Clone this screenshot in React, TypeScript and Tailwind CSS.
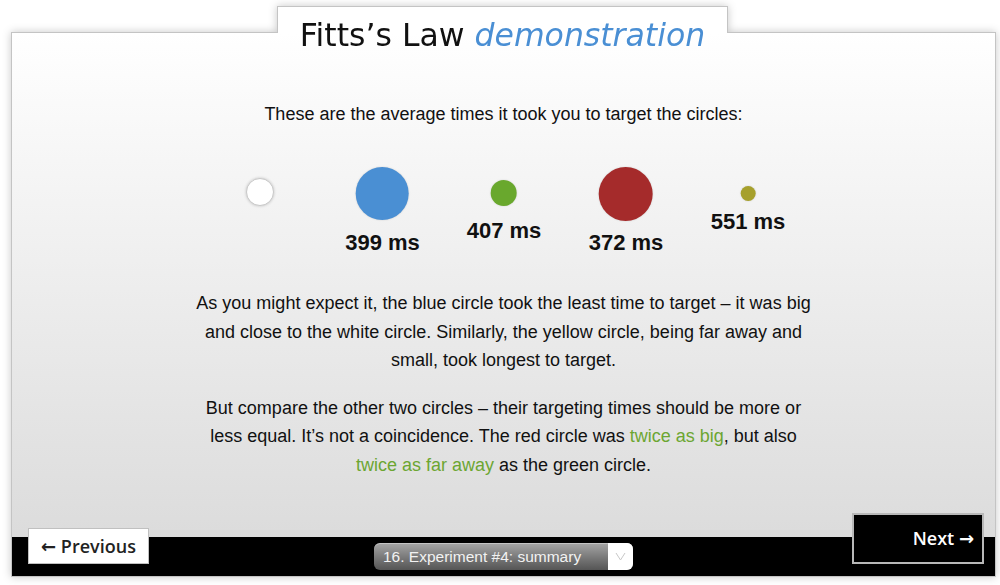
import React from "react";

export default function App() {
  return (
    <div className="w-[1000px] h-[585px] bg-white overflow-hidden" style={{ fontFamily: '"Liberation Sans", Arial, sans-serif' }}>
      <div className="pt-[6px] [filter:drop-shadow(0_0_4px_rgba(0,0,0,0.22))]">
        {/* Tab */}
        <div className="ml-[277px] w-[451px] h-[27px] -mb-px relative z-10 bg-white border-t border-x border-[#c4c4c4]">
          <div
            className="text-center text-[31.5px] leading-[40px] mt-[8px] whitespace-nowrap text-[#111]"
            style={{ fontFamily: '"DejaVu Sans", Verdana, sans-serif' }}
          >
            Fitts’s Law <span className="italic text-[#4a8fd4]">demonstration</span>
          </div>
        </div>
        {/* Panel */}
        <div className="ml-[11px] w-[985px] h-[545px] border border-[#c4c4c4] bg-gradient-to-b from-white to-[#d9d9d9] flex flex-col">
          <div className="flex-1 flex flex-col pt-[67px] text-[18px] text-[#111]">
            <p className="text-center leading-[28px]">These are the average times it took you to target the circles:</p>
            {/* Circles canvas */}
            <div className="relative h-[161px] w-full">
              <div className="absolute left-[248px] top-[50px] -translate-x-1/2 flex flex-col items-center">
                <div className="w-[28px] h-[28px] rounded-full bg-white border border-[#c8c8c8] shadow-[0_0_3px_rgba(0,0,0,0.2)]" />
              </div>
              <div className="absolute left-[370.5px] top-[39px] -translate-x-1/2 flex flex-col items-center">
                <div className="w-[53px] h-[53px] rounded-full bg-[#4a8fd3] shadow-[0_0_2px_rgba(0,0,0,0.15)]" />
                <div className="mt-[12px] text-[22px] leading-none font-bold whitespace-nowrap">399 ms</div>
              </div>
              <div className="absolute left-[492px] top-[52px] -translate-x-1/2 flex flex-col items-center">
                <div className="w-[26px] h-[26px] rounded-full bg-[#69a82d] shadow-[0_0_2px_rgba(0,0,0,0.15)]" />
                <div className="mt-[14px] text-[22px] leading-none font-bold whitespace-nowrap">407 ms</div>
              </div>
              <div className="absolute left-[614px] top-[39px] -translate-x-1/2 flex flex-col items-center">
                <div className="w-[54px] h-[54px] rounded-full bg-[#a52b2b] shadow-[0_0_2px_rgba(0,0,0,0.15)]" />
                <div className="mt-[11px] text-[22px] leading-none font-bold whitespace-nowrap">372 ms</div>
              </div>
              <div className="absolute left-[736px] top-[58px] -translate-x-1/2 flex flex-col items-center">
                <div className="w-[15px] h-[15px] rounded-full bg-[#a6a02c] shadow-[0_0_2px_rgba(0,0,0,0.15)]" />
                <div className="mt-[10px] text-[22px] leading-none font-bold whitespace-nowrap">551 ms</div>
              </div>
            </div>
            <p className="w-[616px] mx-auto text-center leading-[28.5px]">
              As you might expect it, the blue circle took the least time to target – it was big and close to the white circle. Similarly, the yellow circle, being far away and small, took longest to target.
            </p>
            <p className="w-[616px] mx-auto mt-[19px] text-center leading-[28.5px]">
              But compare the other two circles – their targeting times should be more or less equal. It’s not a coincidence. The red circle was{" "}
              <span className="text-[#6ca632]">twice as big</span>, but also{" "}
              <span className="text-[#6ca632]">twice as far away</span> as the green circle.
            </p>
          </div>
          {/* Footer */}
          <div className="relative h-[39px] bg-black flex items-center justify-center">
            <div className="w-[259px] h-[27px] rounded-[6px] overflow-hidden flex bg-gradient-to-b from-[#a6a6a6] via-[#7c7c7c] to-[#555] shadow-[inset_0_1px_0_rgba(255,255,255,0.35)]">
              <div className="flex-1 flex items-center pl-[9px] text-[15.5px] text-[#f2f2f2] whitespace-nowrap">16. Experiment #4: summary</div>
              <div className="w-[25px] bg-white flex items-center justify-center">
                <svg width="11" height="9" viewBox="0 0 11 9" fill="none">
                  <path d="M1 1 L5.5 8 L10 1" stroke="#c8c8c8" strokeWidth="1" />
                </svg>
              </div>
            </div>
            <button
              className="absolute left-[16px] top-[-9px] w-[121px] h-[36px] bg-white border border-[#c0c0c0] text-[#222] text-[18px] font-semibold flex items-center justify-center"
              style={{ fontFamily: '"Open Sans", "DejaVu Sans", sans-serif' }}
            >
              ← Previous
            </button>
            <button
              className="absolute left-[840px] top-[-24px] w-[132px] h-[51px] bg-black border-2 border-[#b8b8b8] text-white text-[18px] font-semibold flex items-center justify-end pr-[8px]"
              style={{ fontFamily: '"Open Sans", "DejaVu Sans", sans-serif' }}
            >
              Next →
            </button>
          </div>
        </div>
      </div>
    </div>
  );
}
